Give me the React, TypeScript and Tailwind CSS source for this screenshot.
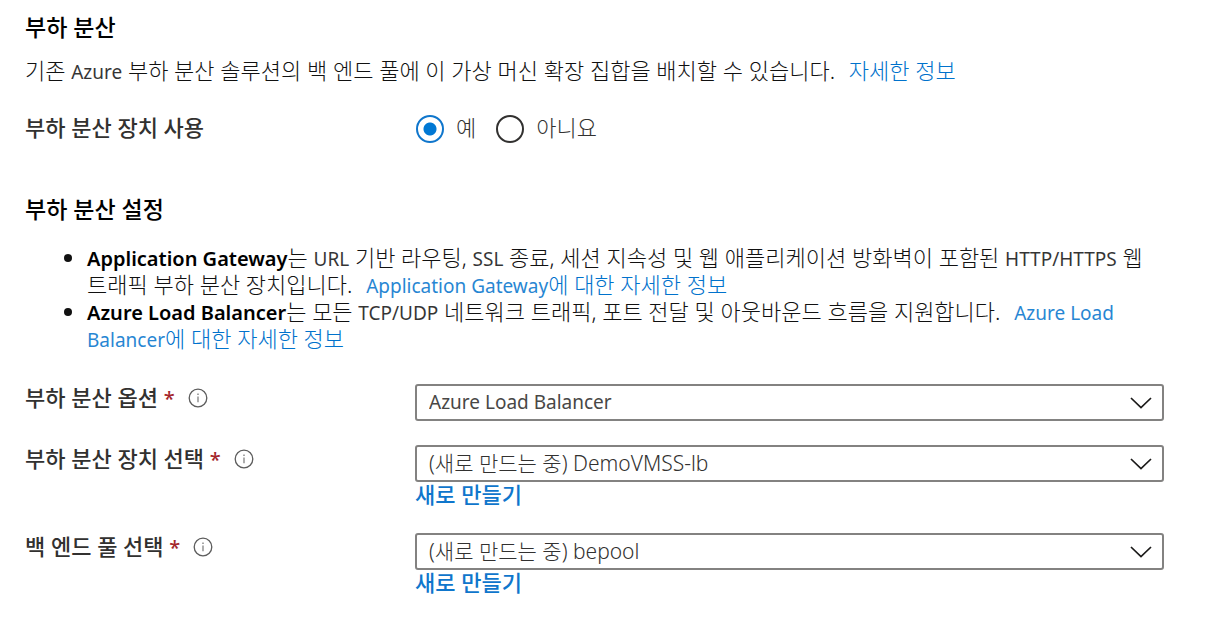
import { useState } from "react";
import type { ReactNode } from "react";

function InfoIcon() {
  return (
    <svg viewBox="0 0 20 20" className="size-5 shrink-0" fill="none" stroke="#5c5c5c" aria-hidden="true">
      <circle cx="10" cy="10" r="8.8" strokeWidth="1.3" />
      <path d="M10 8.4v5.8" stroke="#777" strokeWidth="1.2" />
      <path d="M10 5.6v1.4" stroke="#777" strokeWidth="1.3" />
    </svg>
  );
}

function Chevron() {
  return (
    <svg
      viewBox="0 0 22 12"
      className="pointer-events-none absolute top-1/2 right-3 h-3 w-[22px] -translate-y-1/2"
      fill="none"
      stroke="#1b1a19"
      strokeWidth="1.7"
      aria-hidden="true"
    >
      <path d="M1 1l10 9.6L21 1" />
    </svg>
  );
}

/* Latin words are set a little smaller than the Hangul around them. */
function Latin({ children }: { children: ReactNode }) {
  return <span className="text-[19px] leading-none font-normal opacity-85">{children}</span>;
}

function Product({ children }: { children: ReactNode }) {
  return <strong className="text-[20px] leading-none font-semibold text-black">{children}</strong>;
}

function MoreLink({ children }: { children: ReactNode }) {
  return (
    <a href="#" className="ml-2 text-[#0072cc] hover:underline">
      {children}
    </a>
  );
}

interface FieldProps {
  id: string;
  label: string;
  option: string;
  latin?: boolean;
  creatable?: boolean;
}

function Field({ id, label, option, latin, creatable }: FieldProps) {
  return (
    <div className="flex items-start">
      <div className="flex w-[390px] shrink-0 items-center leading-[26px]">
        <label htmlFor={id} className="font-medium text-[#323130]">
          {label} <span className="text-[20px] leading-none text-[#a4262c]">*</span>
        </label>
        <button type="button" aria-label={`${label} 정보`} className="mt-0.5 ml-[13px]">
          <InfoIcon />
        </button>
      </div>
      <div className="min-w-0 flex-1">
        <div className="relative">
          <select
            id={id}
            className={
              "block h-[37px] w-full appearance-none rounded-[3px] border-2 border-[#838281] bg-white pr-10 pl-3 " +
              (latin ? "text-[19px] font-normal text-[#484746]" : "text-[21px] text-[#323130]")
            }
          >
            <option>{option}</option>
          </select>
          <Chevron />
        </div>
        {creatable && (
          <button type="button" className="mb-0.5 block leading-[25px] font-medium text-[#0f76cc]">
            새로 만들기
          </button>
        )}
      </div>
    </div>
  );
}

function Choice({ label, checked, onChange }: { label: string; checked: boolean; onChange: () => void }) {
  return (
    <label className="flex items-center gap-3">
      <input
        type="radio"
        name="use-load-balancer"
        checked={checked}
        onChange={onChange}
        className="size-7 appearance-none rounded-full border-2 border-[#323130] checked:border-[#0f76cc] checked:bg-[radial-gradient(circle,#0078d4_6px,transparent_7px)]"
      />
      <span className="-mt-1 text-[#323130]">{label}</span>
    </label>
  );
}

export default function App() {
  const [enabled, setEnabled] = useState(true);
  return (
    <main className="bg-white pt-3 pr-[58px] pb-4 pl-[25px] font-['Noto_Sans','Noto_Sans_CJK_KR',sans-serif] text-[22px] leading-[27px] font-light break-keep text-[#111]">
      <h2 className="text-[23px] leading-[30px] font-medium text-black">부하 분산</h2>
      <p className="mt-[15px]">
        기존 <Latin>Azure</Latin> 부하 분산 솔루션의 백 엔드 풀에 이 가상 머신 확장 집합을 배치할 수 있습니다.{" "}
        <MoreLink>자세한 정보</MoreLink>
      </p>
      <fieldset className="mt-[31px] flex items-center">
        <legend className="float-left -mt-1 w-[391px] font-medium text-[#323130]">부하 분산 장치 사용</legend>
        <div className="flex gap-5">
          <Choice label="예" checked={enabled} onChange={() => setEnabled(true)} />
          <Choice label="아니요" checked={!enabled} onChange={() => setEnabled(false)} />
        </div>
      </fieldset>
      <h2 className="mt-[51px] text-[23px] leading-[30px] font-medium text-black">부하 분산 설정</h2>
      <ul className="mt-5 list-disc pl-[62px]">
        <li>
          <Product>Application Gateway</Product>는 <Latin>URL</Latin> 기반 라우팅, <Latin>SSL</Latin> 종료, 세션 지속성 및 웹
          애플리케이션 방화벽이 포함된 <Latin>HTTP/HTTPS</Latin> 웹 트래픽 부하 분산 장치입니다.{" "}
          <MoreLink>
            <Latin>Application Gateway</Latin>에 대한 자세한 정보
          </MoreLink>
        </li>
        <li>
          <Product>Azure Load Balancer</Product>는 모든 <Latin>TCP/UDP</Latin> 네트워크 트래픽, 포트 전달 및 아웃바운드 흐름을
          지원합니다.{" "}
          <MoreLink>
            <Latin>Azure Load Balancer</Latin>에 대한 자세한 정보
          </MoreLink>
        </li>
      </ul>
      <div className="mt-8 flex flex-col gap-6">
        <Field id="option" label="부하 분산 옵션" option="Azure Load Balancer" latin />
        <Field id="balancer" label="부하 분산 장치 선택" option="(새로 만드는 중) DemoVMSS-lb" creatable />
        <Field id="pool" label="백 엔드 풀 선택" option="(새로 만드는 중) bepool" creatable />
      </div>
    </main>
  );
}
